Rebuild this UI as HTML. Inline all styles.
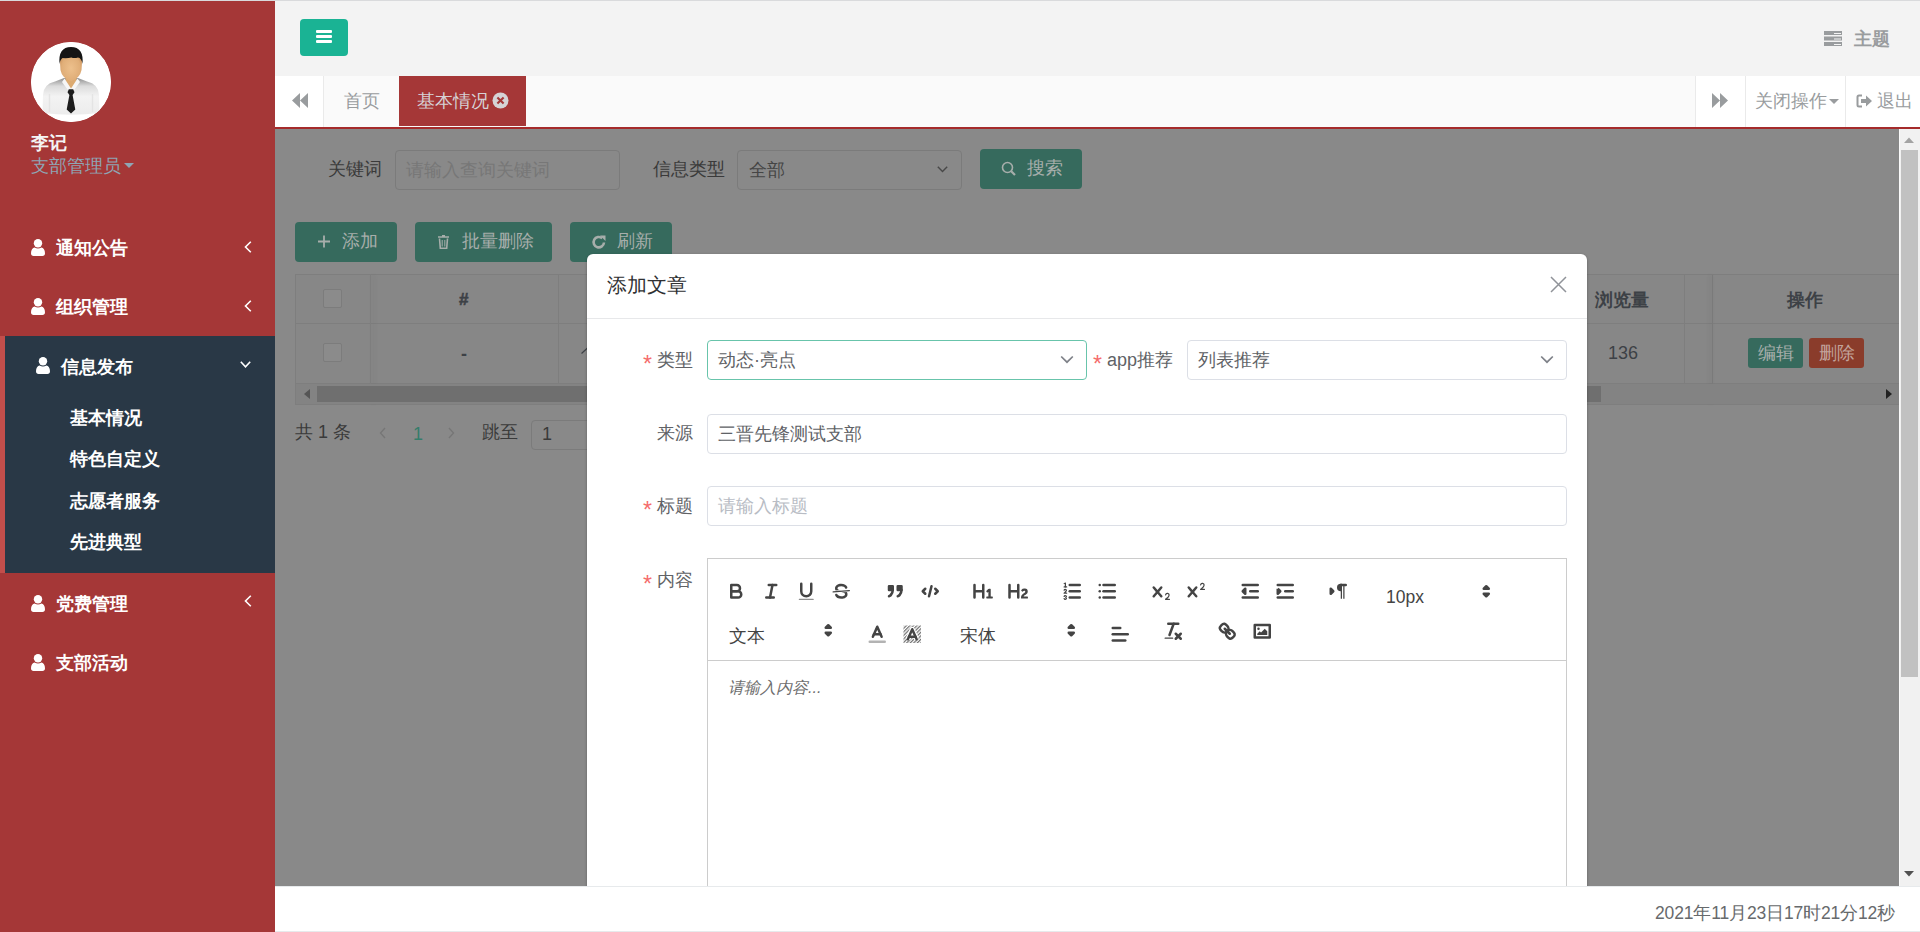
<!DOCTYPE html>
<html><head><meta charset="utf-8">
<style>
*{box-sizing:border-box;margin:0;padding:0}
html,body{width:1920px;height:932px;overflow:hidden}
body{position:relative;background:#f3f3f3;font-family:"Liberation Sans",sans-serif;color:#676a6c}
.a{position:absolute}
svg{display:block}
.topline{left:0;top:0;width:1920px;height:1px;background:#d9dadc}
/* sidebar */
.side{left:0;top:1px;width:275px;height:931px;background:#a53737}
.avatar{left:31px;top:42px;width:80px;height:80px;border-radius:50%;background:#fff;overflow:hidden}
.uname{left:31px;top:131px;font-size:18px;font-weight:bold;color:#f4f4f4;line-height:24px;white-space:nowrap}
.urole{left:31px;top:154px;font-size:18px;color:#8fa5b4;line-height:24px;white-space:nowrap}
.caret{display:inline-block;width:0;height:0;border-left:5px solid transparent;border-right:5px solid transparent;border-top:5px solid #8fa5b4;vertical-align:middle;margin-left:3px;position:relative;top:-2px}
.nav{color:#fff;font-size:18px;font-weight:bold;line-height:24px;white-space:nowrap}
.ico-user{display:inline-block;width:13px;height:15px;position:relative;vertical-align:top}
.active-sec{left:0;top:336px;width:275px;height:237px;background:#293846;border-left:5px solid #c24e4b}
.chev{position:absolute;width:7px;height:7px;border-left:2px solid #fff;border-bottom:2px solid #fff}
/* header */
.menubtn{left:300px;top:19px;width:48px;height:37px;background:#1ab394;border-radius:4px}
.bar{position:absolute;left:16px;width:16px;height:3px;background:#fff;border-radius:1px}
.theme{left:1823px;top:27px;color:#999c9e;font-size:18px;font-weight:bold;line-height:24px}
/* tabs */
.tabbar{left:275px;top:76px;width:1645px;height:51px;background:#fafafa}
.redline{left:275px;top:127px;width:1645px;height:2px;background:#a52b2b}
.tb{position:absolute;top:0;height:51px;line-height:50px;font-size:18px;color:#999c9e;white-space:nowrap}
/* content overlay */
.content{left:275px;top:129px;width:1624px;height:757px;background:#898989;overflow:hidden}
.vscroll{z-index:5;left:1899px;top:129px;width:21px;height:757px;background:#f1f1f1}
.footer{z-index:5;left:275px;top:886px;width:1645px;height:46px;background:#fff;border-top:1px solid #e7eaec}

.c{position:absolute;white-space:nowrap}
.lbl{font-size:18px;color:#3a3a3a;line-height:24px}
.dinput{border:1px solid #7b7b7b;border-radius:4px;background:#898989}
.gbtn{background:#366a5d;border-radius:4px;color:#a7aeab;font-size:18px;line-height:40px}
.th{color:#3d4146;font-weight:bold;font-size:18px}
.cb{width:19px;height:19px;border:1px solid #7c7c7c;border-radius:2px;background:#8b8b8b}
.modal{left:587px;top:254px;width:1000px;height:700px;background:#fff;border-radius:6px;box-shadow:0 1px 3px rgba(0,0,0,.3)}
.mlbl{font-size:18px;color:#606266;line-height:24px}
.star{color:#f56c6c;font-size:23px;margin-right:5px;position:relative;top:6px;line-height:10px}
.minput{border:1px solid #dcdfe6;border-radius:4px;background:#fff;font-size:18px;color:#606266;line-height:38px;padding-left:10px}
.ql{stroke:#444;fill:none;stroke-width:2}
</style></head>
<body>
<div class="a topline"></div>
<div class="a side"></div>
<div class="a active-sec"></div>
<div class="a avatar"><svg width="80" height="80" viewBox="0 0 80 80">
<defs>
<linearGradient id="sh" x1="0" y1="0" x2="0" y2="1"><stop offset="0" stop-color="#8e8e8e"/><stop offset="0.22" stop-color="#dcdcdc"/><stop offset="0.5" stop-color="#f3f3f3"/><stop offset="1" stop-color="#ececec"/></linearGradient>
<radialGradient id="sk" cx="0.5" cy="0.55" r="0.6"><stop offset="0" stop-color="#edc08c"/><stop offset="0.7" stop-color="#e0ae78"/><stop offset="1" stop-color="#c98f58"/></radialGradient>
</defs>
<circle cx="40" cy="40" r="40" fill="#fff"/>
<path d="M11.5 71L12 53Q12.5 42 24 39.5L33 36H47L56 39.5Q67.5 42 68 53L68.5 71Q40 74.5 11.5 71Z" fill="url(#sh)"/>
<path d="M18.5 70V52M61.5 70V52" stroke="#e4e4e4" stroke-width="1.5"/>
<path d="M34.5 33H45.5V43L40 48L34.5 43Z" fill="#dcaa70"/>
<path d="M33.5 36.5L40 46.5L46.5 36.5L49 40L42 49.5H38L31 40Z" fill="#f6f6f6"/>
<path d="M29 20Q29 10 40 10Q51 10 51 20L50.5 28Q49 36 40 39.5Q31 36 29.5 28Z" fill="url(#sk)"/>
<path d="M28.5 22Q27 5 40 5Q53 5 51.5 22Q50.5 16 47 15.5Q43 16.5 40.5 15.5Q36 16.5 31.5 16Q29.2 17.5 28.5 22Z" fill="#151515"/>
<path d="M37.8 47.2H42.2L43.5 50.2L41.6 53L44.3 67.5L40 71.5L35.7 67.5L38.4 53L36.5 50.2Z" fill="#1d1d1d"/>
</svg></div>
<div class="a uname">李记</div>
<div class="a urole">支部管理员<span class="caret"></span></div>

<div class="a nav" style="left:56px;top:236px">通知公告</div>
<div class="a nav" style="left:56px;top:295px">组织管理</div>
<div class="a nav" style="left:61px;top:355px">信息发布</div>
<div class="a nav" style="left:70px;top:406px">基本情况</div>
<div class="a nav" style="left:70px;top:447px">特色自定义</div>
<div class="a nav" style="left:70px;top:489px">志愿者服务</div>
<div class="a nav" style="left:70px;top:530px">先进典型</div>
<div class="a nav" style="left:56px;top:592px">党费管理</div>
<div class="a nav" style="left:56px;top:651px">支部活动</div>

<div class="a" style="left:31px;top:239px"><svg width="14" height="17" viewBox="0 0 14 17"><circle cx="7" cy="4.3" r="4.2" fill="#fff"/><path d="M0 14.2C0 11 1.6 8.9 3.6 8.6Q7 10.6 10.4 8.6C12.4 8.9 14 11 14 14.2C14 16 13 17 11.5 17H2.5C1 17 0 16 0 14.2Z" fill="#fff"/></svg></div>
<div class="a" style="left:31px;top:298px"><svg width="14" height="17" viewBox="0 0 14 17"><circle cx="7" cy="4.3" r="4.2" fill="#fff"/><path d="M0 14.2C0 11 1.6 8.9 3.6 8.6Q7 10.6 10.4 8.6C12.4 8.9 14 11 14 14.2C14 16 13 17 11.5 17H2.5C1 17 0 16 0 14.2Z" fill="#fff"/></svg></div>
<div class="a" style="left:31px;top:595px"><svg width="14" height="17" viewBox="0 0 14 17"><circle cx="7" cy="4.3" r="4.2" fill="#fff"/><path d="M0 14.2C0 11 1.6 8.9 3.6 8.6Q7 10.6 10.4 8.6C12.4 8.9 14 11 14 14.2C14 16 13 17 11.5 17H2.5C1 17 0 16 0 14.2Z" fill="#fff"/></svg></div>
<div class="a" style="left:36px;top:357px"><svg width="14" height="17" viewBox="0 0 14 17"><circle cx="7" cy="4.3" r="4.2" fill="#fff"/><path d="M0 14.2C0 11 1.6 8.9 3.6 8.6Q7 10.6 10.4 8.6C12.4 8.9 14 11 14 14.2C14 16 13 17 11.5 17H2.5C1 17 0 16 0 14.2Z" fill="#fff"/></svg></div>
<div class="a" style="left:36px;top:651px;display:none"></div>
<div class="a" style="left:31px;top:654px"><svg width="14" height="17" viewBox="0 0 14 17"><circle cx="7" cy="4.3" r="4.2" fill="#fff"/><path d="M0 14.2C0 11 1.6 8.9 3.6 8.6Q7 10.6 10.4 8.6C12.4 8.9 14 11 14 14.2C14 16 13 17 11.5 17H2.5C1 17 0 16 0 14.2Z" fill="#fff"/></svg></div>
<div class="a" style="left:244px;top:241px"><svg width="8" height="12" viewBox="0 0 8 12"><path d="M6.8 0.8L1.5 6L6.8 11.2" stroke="#fff" stroke-width="1.6" fill="none"/></svg></div>
<div class="a" style="left:244px;top:300px"><svg width="8" height="12" viewBox="0 0 8 12"><path d="M6.8 0.8L1.5 6L6.8 11.2" stroke="#fff" stroke-width="1.6" fill="none"/></svg></div>
<div class="a" style="left:244px;top:595px"><svg width="8" height="12" viewBox="0 0 8 12"><path d="M6.8 0.8L1.5 6L6.8 11.2" stroke="#fff" stroke-width="1.6" fill="none"/></svg></div>
<div class="a" style="left:240px;top:361px"><svg width="11" height="7" viewBox="0 0 11 7"><path d="M0.8 0.8L5.5 5.8L10.2 0.8" stroke="#fff" stroke-width="1.6" fill="none"/></svg></div>
<div class="a menubtn"><div class="bar" style="top:11px"></div><div class="bar" style="top:16px"></div><div class="bar" style="top:21px"></div></div>
<div class="a" style="left:1824px;top:31px"><svg width="18" height="15" viewBox="0 0 18 15"><rect x="0" y="0" width="18" height="4" fill="#999c9e"/><rect x="0" y="5.5" width="18" height="4" fill="#999c9e"/><rect x="0" y="11" width="18" height="4" fill="#999c9e"/><rect x="10" y="2" width="7" height="1" fill="#f3f3f3"/><rect x="10" y="7.5" width="7" height="1" fill="#f3f3f3"/><rect x="10" y="13" width="7" height="1" fill="#f3f3f3"/></svg></div>
<div class="a theme" style="left:1854px">主题</div>

<div class="a tabbar">
 <div class="tb" style="left:0;width:49px;background:#fff;border-right:1px solid #eaeaea"><div class="a" style="left:17px;top:17px"><svg width="16" height="15" viewBox="0 0 16 15"><path d="M8 0V15L0 7.5Z M16 0V15L8 7.5Z" fill="#999c9e"/></svg></div></div>
 <div class="tb" style="left:69px">首页</div>
 <div class="tb" style="left:124px;width:127px;height:50px;background:#a53737;color:#d6d2d6"><span style="position:absolute;left:18px">基本情况</span><div class="a" style="left:92.5px;top:16px"><svg width="17" height="17" viewBox="0 0 17 17"><circle cx="8.5" cy="8.5" r="8" fill="#d5d3d5"/><path d="M5.4 5.4L11.6 11.6M11.6 5.4L5.4 11.6" stroke="#a53737" stroke-width="2.1"/></svg></div></div>
 <div class="tb" style="left:1420px;width:50px;background:#fff;border-left:1px solid #eaeaea"><div class="a" style="left:16px;top:17px"><svg width="16" height="15" viewBox="0 0 16 15"><path d="M0 0V15L8 7.5Z M8 0V15L16 7.5Z" fill="#999c9e"/></svg></div></div>
 <div class="tb" style="left:1470px;width:100px;background:#fff;border-left:1px solid #eaeaea"><span style="position:absolute;left:8.5px">关闭操作</span><span style="position:absolute;left:83px;top:23px;width:0;height:0;border-left:5px solid transparent;border-right:5px solid transparent;border-top:5px solid #999c9e"></span></div>
 <div class="tb" style="left:1570px;width:75px;background:#fff;border-left:1px solid #eaeaea"><div class="a" style="left:10px;top:17px"><svg width="17" height="16" viewBox="0 0 17 16"><path d="M6 2.5H3Q1.5 2.5 1.5 4V12Q1.5 13.5 3 13.5H6" stroke="#999c9e" stroke-width="2" fill="none"/><path d="M5 6H10V2.5L16 8L10 13.5V10H5Z" fill="#999c9e"/></svg></div><span style="position:absolute;left:31px">退出</span></div>
</div>
<div class="a redline"></div>
<div class="a content"></div>
<!-- search row -->
<div class="c lbl" style="left:328px;top:157px">关键词</div>
<div class="c dinput" style="left:395px;top:150px;width:225px;height:40px"><span class="c" style="left:10px;top:7px;font-size:18px;color:#777;line-height:24px">请输入查询关键词</span></div>
<div class="c lbl" style="left:653px;top:157px">信息类型</div>
<div class="c dinput" style="left:737px;top:150px;width:225px;height:40px"><span class="c" style="left:11px;top:7px;font-size:18px;color:#454545;line-height:24px">全部</span><svg class="c" style="left:199px;top:15px" width="11" height="7" viewBox="0 0 11 7"><path d="M0.8 0.8L5.5 5.6L10.2 0.8" stroke="#484848" stroke-width="1.4" fill="none"/></svg></div>
<div class="c gbtn" style="left:980px;top:149px;width:102px;height:40px"><svg class="c" style="left:21px;top:12px" width="16" height="16" viewBox="0 0 16 16"><circle cx="6.5" cy="6.5" r="5" stroke="#a7aeab" stroke-width="1.6" fill="none"/><path d="M10.2 10.2L14 14" stroke="#a7aeab" stroke-width="2.2"/></svg><span class="c" style="left:47px;top:-1.5px">搜索</span></div>
<!-- action buttons -->
<div class="c gbtn" style="left:295px;top:222px;width:102px;height:40px"><svg class="c" style="left:23px;top:13px" width="12" height="13" viewBox="0 0 12 13"><path d="M6 0.5V12.5M0 6.5H12" stroke="#a7aeab" stroke-width="1.8"/></svg><span class="c" style="left:47px;top:-1.5px">添加</span></div>
<div class="c gbtn" style="left:415px;top:222px;width:137px;height:40px"><svg class="c" style="left:23px;top:13px" width="11" height="14" viewBox="0 0 11 14"><path d="M0 2H11M4 0.8H7M1.5 3.5L2.3 13.2H8.7L9.5 3.5" stroke="#a7aeab" stroke-width="1.6" fill="none"/><path d="M4.2 5V11.5M6.8 5V11.5" stroke="#a7aeab" stroke-width="1"/></svg><span class="c" style="left:47px;top:-1.5px">批量删除</span></div>
<div class="c gbtn" style="left:570px;top:222px;width:102px;height:40px"><svg class="c" style="left:21px;top:12px" width="16" height="16" viewBox="0 0 16 16"><path d="M13 8.5A5.2 5.2 0 1 1 11.2 4.2" stroke="#a7aeab" stroke-width="2.6" fill="none"/><path d="M9 1.5L14.5 1.5L14.5 7Z" fill="#a7aeab"/></svg><span class="c" style="left:47px;top:-1.5px">刷新</span></div>
<!-- table -->
<div class="c" style="left:295px;top:274px;width:1604px;height:131px;border:1px solid #7e7e7e;border-right:none;background:#878787"></div>
<div class="c" style="left:296px;top:323px;width:1603px;height:1px;background:#7e7e7e"></div>
<div class="c" style="left:296px;top:383px;width:1603px;height:1px;background:#7e7e7e"></div>
<div class="c" style="left:370px;top:275px;width:1px;height:129px;background:#7e7e7e;box-shadow:3px 0 5px rgba(0,0,0,.10)"></div>
<div class="c" style="left:558px;top:275px;width:1px;height:108px;background:#7e7e7e"></div>
<div class="c" style="left:1684px;top:275px;width:1px;height:108px;background:#7e7e7e"></div>
<div class="c" style="left:1712px;top:275px;width:1px;height:129px;background:#7a7a7a;box-shadow:-2px 0 4px rgba(0,0,0,.12)"></div>
<div class="c cb" style="left:323px;top:289px"></div>
<div class="c cb" style="left:323px;top:343px"></div>
<div class="c th" style="left:459px;top:290px;font-size:17px;-webkit-text-stroke:0.6px #3d4146">#</div>
<div class="c" style="left:461px;top:344px;font-size:18px;color:#3d4146;font-weight:bold">-</div>
<div class="c th" style="left:1595px;top:288px">浏览量</div>
<div class="c th" style="left:1787px;top:288px">操作</div>
<div class="c" style="left:1608px;top:343px;font-size:18px;color:#3d4146">136</div>
<div class="c" style="left:1748px;top:338px;width:55px;height:30px;background:#366a5d;border-radius:3px;color:#a7aeab;font-size:18px;line-height:30px;text-align:center">编辑</div>
<div class="c" style="left:1809px;top:338px;width:55px;height:30px;background:#8a3c2b;border-radius:3px;color:#c2a39c;font-size:18px;line-height:30px;text-align:center">删除</div>
<svg class="c" style="left:581px;top:347px" width="7" height="7" viewBox="0 0 7 7"><path d="M0.5 6.5L6.5 1" stroke="#3d4146" stroke-width="1.2"/></svg>
<!-- h scrollbar -->
<div class="c" style="left:296px;top:384px;width:1603px;height:20px;background:#838383"></div>
<div class="c" style="left:317px;top:386px;width:1284px;height:16px;background:#6f6f6f"></div>
<svg class="c" style="left:304px;top:389px" width="6" height="10" viewBox="0 0 6 10"><path d="M6 0V10L0 5Z" fill="#555"/></svg>
<svg class="c" style="left:1886px;top:389px" width="6" height="10" viewBox="0 0 6 10"><path d="M0 0V10L6 5Z" fill="#222"/></svg>
<!-- pagination -->
<div class="c" style="left:295px;top:420px;font-size:18px;color:#3a3a3a;line-height:24px">共 1 条</div>
<svg class="c" style="left:379px;top:427px" width="7" height="12" viewBox="0 0 7 12"><path d="M6 1L1.5 6L6 11" stroke="#767676" stroke-width="1.3" fill="none"/></svg>
<div class="c" style="left:413px;top:422px;font-size:18px;color:#357d6b;line-height:24px">1</div>
<svg class="c" style="left:448px;top:427px" width="7" height="12" viewBox="0 0 7 12"><path d="M1 1L5.5 6L1 11" stroke="#767676" stroke-width="1.3" fill="none"/></svg>
<div class="c" style="left:482px;top:420px;font-size:18px;color:#3a3a3a;line-height:24px">跳至</div>
<div class="c dinput" style="left:531px;top:420px;width:80px;height:30px"><span class="c" style="left:10px;top:1px;font-size:18px;color:#3a3a3a;line-height:24px">1</span></div>

<!-- modal -->
<div class="a modal">
 <div class="c" style="left:20px;top:18px;font-size:20px;color:#303133;line-height:26px">添加文章</div>
 <svg class="c" style="left:963px;top:22px" width="17" height="17" viewBox="0 0 17 17"><path d="M1 1L16 16M16 1L1 16" stroke="#909399" stroke-width="1.5"/></svg>
 <div class="c" style="left:0;top:64px;width:1000px;height:1px;background:#e7e8ea"></div>
 <!-- row1 -->
 <div class="c mlbl" style="left:0;width:106px;text-align:right;top:94px"><span class="star">*</span>类型</div>
 <div class="c minput" style="left:120px;top:86px;width:380px;height:40px;border-color:#68c4ab">动态·亮点<svg class="c" style="left:352px;top:14px" width="14" height="9" viewBox="0 0 14 9"><path d="M1.2 1.5L7 7.2L12.8 1.5" stroke="#7e8188" stroke-width="1.7" fill="none"/></svg></div>
 <div class="c mlbl" style="left:400px;width:186px;text-align:right;top:94px"><span class="star">*</span>app推荐</div>
 <div class="c minput" style="left:600px;top:86px;width:380px;height:40px">列表推荐<svg class="c" style="left:352px;top:14px" width="14" height="9" viewBox="0 0 14 9"><path d="M1.2 1.5L7 7.2L12.8 1.5" stroke="#7e8188" stroke-width="1.7" fill="none"/></svg></div>
 <!-- row2 -->
 <div class="c mlbl" style="left:0;width:106px;text-align:right;top:167px">来源</div>
 <div class="c minput" style="left:120px;top:160px;width:860px;height:40px">三晋先锋测试支部</div>
 <!-- row3 -->
 <div class="c mlbl" style="left:0;width:106px;text-align:right;top:240px"><span class="star">*</span>标题</div>
 <div class="c minput" style="left:120px;top:232px;width:860px;height:40px;color:#b8bcc4">请输入标题</div>
 <!-- row4 -->
 <div class="c mlbl" style="left:0;width:106px;text-align:right;top:314px"><span class="star">*</span>内容</div>
 <div class="c" style="left:120px;top:304px;width:860px;height:600px;border:1px solid #ccc"></div>
 <div class="c" style="left:121px;top:406px;width:858px;height:1px;background:#ccc"></div>
<svg class="c" style="left:137.75px;top:325.75px" width="22.5" height="22.5" viewBox="0 0 18 18"><path stroke="#444" stroke-width="2" fill="none" stroke-linecap="round" stroke-linejoin="round" d="M5,4H9.5A2.5,2.5,0,0,1,12,6.5v0A2.5,2.5,0,0,1,9.5,9H5A0,0,0,0,1,5,9V4A0,0,0,0,1,5,4Z"/><path stroke="#444" stroke-width="2" fill="none" stroke-linecap="round" stroke-linejoin="round" d="M5,9h5.5A2.5,2.5,0,0,1,13,11.5v0A2.5,2.5,0,0,1,10.5,14H5a0,0,0,0,1,0,0V9A0,0,0,0,1,5,9Z"/></svg>
<svg class="c" style="left:172.75px;top:325.75px" width="22.5" height="22.5" viewBox="0 0 18 18"><line stroke="#444" stroke-width="2" fill="none" stroke-linecap="round" stroke-linejoin="round" x1="7" x2="13" y1="4" y2="4"/><line stroke="#444" stroke-width="2" fill="none" stroke-linecap="round" stroke-linejoin="round" x1="5" x2="11" y1="14" y2="14"/><line stroke="#444" stroke-width="2" fill="none" stroke-linecap="round" stroke-linejoin="round" x1="8" x2="10" y1="14" y2="4"/></svg>
<svg class="c" style="left:207.75px;top:325.75px" width="22.5" height="22.5" viewBox="0 0 18 18"><path stroke="#444" stroke-width="2" fill="none" stroke-linecap="round" stroke-linejoin="round" d="M5,3V9a4.012,4.012,0,0,0,4,4H9a3.974,3.974,0,0,0,4-4V3"/><rect fill="#444" opacity="0.6" height="1" rx="0.5" ry="0.5" width="12" x="3" y="15"/></svg>
<svg class="c" style="left:242.75px;top:325.75px" width="22.5" height="22.5" viewBox="0 0 18 18"><line stroke="#444" stroke-width="1" fill="none" stroke-linecap="round" stroke-linejoin="round" x1="15.5" x2="2.5" y1="8.5" y2="9.5"/><path fill="#444" d="M9.007,8C6.542,7.791,6,7.519,6,6.5,6,5.792,7.283,5,9,5c1.571,0,2.765.679,2.969,1.309a1,1,0,0,0,1.9-.617C13.356,4.106,11.354,3,9,3,6.2,3,4,4.538,4,6.5a3.2,3.2,0,0,0,.5,1.843Z"/><path fill="#444" d="M8.984,10C11.457,10.208,12,10.479,12,11.5c0,0.708-1.283,1.5-3,1.5-1.571,0-2.765-.679-2.969-1.309a1,1,0,1,0-1.9.617C4.644,13.894,6.646,15,9,15c2.8,0,5-1.538,5-3.5a3.2,3.2,0,0,0-.5-1.843Z"/></svg>
<svg class="c" style="left:296.50px;top:325.75px" width="22.5" height="22.5" viewBox="0 0 18 18"><rect fill="#444" stroke="#444" stroke-width="2" stroke-linejoin="round" height="3" width="3" x="4" y="5"/><rect fill="#444" stroke="#444" stroke-width="2" stroke-linejoin="round" height="3" width="3" x="11" y="5"/><path fill="#444" fill-rule="evenodd" stroke="#444" stroke-width="2" stroke-linecap="round" d="M7,8c0,4.031-3,5-3,4.969"/><path fill="#444" fill-rule="evenodd" stroke="#444" stroke-width="2" stroke-linecap="round" d="M14,8c0,4.031-3,5-3,4.969"/></svg>
<svg class="c" style="left:331.50px;top:325.75px" width="22.5" height="22.5" viewBox="0 0 18 18"><polyline stroke="#444" stroke-width="2" fill="none" stroke-linecap="round" stroke-linejoin="round" points="5 7 3 9 5 11"/><polyline stroke="#444" stroke-width="2" fill="none" stroke-linecap="round" stroke-linejoin="round" points="13 7 15 9 13 11"/><line stroke="#444" stroke-width="2" fill="none" stroke-linecap="round" stroke-linejoin="round" x1="10" x2="8" y1="5" y2="13"/></svg>
<svg class="c" style="left:385.25px;top:325.75px" width="22.5" height="22.5" viewBox="0 0 18 18"><path fill="#444" d="M10,4V14a1,1,0,0,1-2,0V10H3v4a1,1,0,0,1-2,0V4A1,1,0,0,1,3,4V8H8V4a1,1,0,0,1,2,0Zm6.06787,9.209H14.98975V7.59863a.54085.54085,0,0,0-.605-.60547h-.62744a1.01119,1.01119,0,0,0-.748.29688L11.645,8.56641a.5435.5435,0,0,0-.022.8584l.28613.30762a.53861.53861,0,0,0,.84717.0332l.09912-.08789a1.2137,1.2137,0,0,0,.2417-.35254h.02246s-.01123.30859-.01123.60547V13.209H12.041a.54085.54085,0,0,0-.605.60547v.43945a.54085.54085,0,0,0,.605.60547h4.02686a.54085.54085,0,0,0,.605-.60547v-.43945A.54085.54085,0,0,0,16.06787,13.209Z"/></svg>
<svg class="c" style="left:420.25px;top:325.75px" width="22.5" height="22.5" viewBox="0 0 18 18"><path fill="#444" d="M16.73975,13.81445v.43945a.54085.54085,0,0,1-.605.60547H11.855a.58392.58392,0,0,1-.64893-.60547V14.0127c0-2.90527,3.39941-3.42187,3.39941-4.55469a.77675.77675,0,0,0-.84717-.78125,1.17684,1.17684,0,0,0-.83594.38477c-.2749.26367-.561.374-.85791.13184l-.4292-.34082c-.30811-.24219-.38525-.51758-.1543-.81445a2.97155,2.97155,0,0,1,2.45361-1.17676,2.45393,2.45393,0,0,1,2.68408,2.40918c0,2.45312-3.1792,2.92676-3.27832,3.93848h2.79443A.54085.54085,0,0,1,16.73975,13.81445ZM9,3A.99974.99974,0,0,0,8,4V8H3V4A1,1,0,0,0,1,4V14a1,1,0,0,0,2,0V10H8v4a1,1,0,0,0,2,0V4A.99974.99974,0,0,0,9,3Z"/></svg>
<svg class="c" style="left:474.00px;top:325.75px" width="22.5" height="22.5" viewBox="0 0 18 18"><line stroke="#444" stroke-width="2" fill="none" stroke-linecap="round" stroke-linejoin="round" x1="7" x2="15" y1="4" y2="4"/><line stroke="#444" stroke-width="2" fill="none" stroke-linecap="round" stroke-linejoin="round" x1="7" x2="15" y1="9" y2="9"/><line stroke="#444" stroke-width="2" fill="none" stroke-linecap="round" stroke-linejoin="round" x1="7" x2="15" y1="14" y2="14"/><line stroke="#444" stroke-width="1" fill="none" stroke-linecap="round" stroke-linejoin="round" x1="2.5" x2="4.5" y1="5.5" y2="5.5"/><path fill="#444" d="M3.5,6A0.5,0.5,0,0,1,3,5.5V3.085l-0.276.138A0.5,0.5,0,0,1,2.053,3c-0.124-.247-0.023-0.324.224-0.447l1-.5A0.5,0.5,0,0,1,4,2.5v3A0.5,0.5,0,0,1,3.5,6Z"/><path stroke="#444" stroke-width="1" fill="none" stroke-linecap="round" stroke-linejoin="round" d="M4.5,10.5h-2c0-.234,1.85-1.076,1.85-2.234A0.959,0.959,0,0,0,2.5,8.156"/><path stroke="#444" stroke-width="1" fill="none" stroke-linecap="round" stroke-linejoin="round" d="M2.5,14.846a0.959,0.959,0,0,0,1.85-.109A0.7,0.7,0,0,0,3.75,14a0.688,0.688,0,0,0,.6-0.736,0.959,0.959,0,0,0-1.85-.109"/></svg>
<svg class="c" style="left:509.00px;top:325.75px" width="22.5" height="22.5" viewBox="0 0 18 18"><line stroke="#444" stroke-width="2" fill="none" stroke-linecap="round" stroke-linejoin="round" x1="6" x2="15" y1="4" y2="4"/><line stroke="#444" stroke-width="2" fill="none" stroke-linecap="round" stroke-linejoin="round" x1="6" x2="15" y1="9" y2="9"/><line stroke="#444" stroke-width="2" fill="none" stroke-linecap="round" stroke-linejoin="round" x1="6" x2="15" y1="14" y2="14"/><line stroke="#444" stroke-width="2" fill="none" stroke-linecap="round" stroke-linejoin="round" x1="3" x2="3" y1="4" y2="4"/><line stroke="#444" stroke-width="2" fill="none" stroke-linecap="round" stroke-linejoin="round" x1="3" x2="3" y1="9" y2="9"/><line stroke="#444" stroke-width="2" fill="none" stroke-linecap="round" stroke-linejoin="round" x1="3" x2="3" y1="14" y2="14"/></svg>
<svg class="c" style="left:562.75px;top:325.75px" width="22.5" height="22.5" viewBox="0 0 18 18"><path fill="#444" d="M15.5,15H13.861a3.858,3.858,0,0,0,1.914-2.975,1.8,1.8,0,0,0-1.6-1.751A1.921,1.921,0,0,0,12.021,11.7a0.50013,0.50013,0,1,0,.957.291h0a0.914,0.914,0,0,1,1.053-.725,0.81,0.81,0,0,1,.744.762c0,1.076-1.16971,1.86982-1.93971,2.43082A1.45639,1.45639,0,0,0,12,15.5a0.5,0.5,0,0,0,.5.5h3A0.5,0.5,0,0,0,15.5,15Z"/><path fill="#444" d="M9.65,5.241a1,1,0,0,0-1.409.108L6,7.964,3.759,5.349A1,1,0,0,0,2.192,6.59178Q2.21541,6.6213,2.241,6.649L4.684,9.5,2.241,12.35A1,1,0,0,0,3.71,13.70722q0.02557-.02768.049-0.05722L6,11.036,8.241,13.65a1,1,0,1,0,1.567-1.24277Q9.78459,12.3777,9.759,12.35L7.316,9.5,9.759,6.651A1,1,0,0,0,9.65,5.241Z"/></svg>
<svg class="c" style="left:597.75px;top:325.75px" width="22.5" height="22.5" viewBox="0 0 18 18"><path fill="#444" d="M15.5,7H13.861a4.015,4.015,0,0,0,1.914-2.975,1.8,1.8,0,0,0-1.6-1.751A1.922,1.922,0,0,0,12.021,3.7a0.5,0.5,0,1,0,.957.291,0.917,0.917,0,0,1,1.053-.725,0.81,0.81,0,0,1,.744.762c0,1.077-1.164,1.925-1.934,2.486A1.423,1.423,0,0,0,12,7.5a0.5,0.5,0,0,0,.5.5h3A0.5,0.5,0,0,0,15.5,7Z"/><path fill="#444" d="M9.651,5.241a1,1,0,0,0-1.41.108L6,7.964,3.759,5.349a1,1,0,1,0-1.519,1.3L4.683,9.5,2.241,12.35a1,1,0,1,0,1.519,1.3L6,11.036,8.241,13.65a1,1,0,0,0,1.519-1.3L7.317,9.5,9.759,6.651A1,1,0,0,0,9.651,5.241Z"/></svg>
<svg class="c" style="left:651.50px;top:325.75px" width="22.5" height="22.5" viewBox="0 0 18 18"><line stroke="#444" stroke-width="2" fill="none" stroke-linecap="round" stroke-linejoin="round" x1="3" x2="15" y1="14" y2="14"/><line stroke="#444" stroke-width="2" fill="none" stroke-linecap="round" stroke-linejoin="round" x1="3" x2="15" y1="4" y2="4"/><line stroke="#444" stroke-width="2" fill="none" stroke-linecap="round" stroke-linejoin="round" x1="9" x2="15" y1="9" y2="9"/><polyline stroke="#444" stroke-width="2" fill="none" stroke-linecap="round" stroke-linejoin="round" fill="#444" points="5 7 5 11 3 9 5 7"/></svg>
<svg class="c" style="left:686.50px;top:325.75px" width="22.5" height="22.5" viewBox="0 0 18 18"><line stroke="#444" stroke-width="2" fill="none" stroke-linecap="round" stroke-linejoin="round" x1="3" x2="15" y1="14" y2="14"/><line stroke="#444" stroke-width="2" fill="none" stroke-linecap="round" stroke-linejoin="round" x1="3" x2="15" y1="4" y2="4"/><line stroke="#444" stroke-width="2" fill="none" stroke-linecap="round" stroke-linejoin="round" x1="9" x2="15" y1="9" y2="9"/><polyline stroke="#444" stroke-width="2" stroke-linejoin="round" fill="#444" points="3 7 3 11 5 9 3 7"/></svg>
<svg class="c" style="left:740.25px;top:325.75px" width="22.5" height="22.5" viewBox="0 0 18 18"><polygon stroke="#444" stroke-width="2" stroke-linejoin="round" fill="#444" points="3 11 5 9 3 7 3 11"/><line stroke="#444" stroke-width="2" fill="none" stroke-linecap="round" stroke-linejoin="round" x1="15" x2="11" y1="4" y2="4"/><path fill="#444" d="M11,3a3,3,0,0,0,0,6h1V3H11Z"/><rect fill="#444" height="11" width="1" x="11" y="4"/><rect fill="#444" height="11" width="1" x="13" y="4"/></svg>
<svg class="c" style="left:887.75px;top:325.75px" width="22.5" height="22.5" viewBox="0 0 18 18"><polygon stroke="#444" stroke-width="2" stroke-linejoin="round" fill="#444" points="7 11 9 13 11 11 7 11"/><polygon stroke="#444" stroke-width="2" stroke-linejoin="round" fill="#444" points="7 7 9 5 11 7 7 7"/></svg>
<svg class="c" style="left:230.00px;top:365.40px" width="22.5" height="22.5" viewBox="0 0 18 18"><polygon stroke="#444" stroke-width="2" stroke-linejoin="round" fill="#444" points="7 11 9 13 11 11 7 11"/><polygon stroke="#444" stroke-width="2" stroke-linejoin="round" fill="#444" points="7 7 9 5 11 7 7 7"/></svg>
<svg class="c" style="left:279.00px;top:369.00px" width="22.5" height="22.5" viewBox="0 0 18 18"><line stroke="#444" opacity="0.4" stroke-width="2" stroke-linecap="round" x1="3" x2="15" y1="15" y2="15"/><polyline stroke="#444" stroke-width="2" fill="none" stroke-linecap="round" stroke-linejoin="round" points="5.5 11 9 3 12.5 11"/><line stroke="#444" stroke-width="2" fill="none" stroke-linecap="round" stroke-linejoin="round" x1="11.63" x2="6.38" y1="9" y2="9"/></svg>
<svg class="c" style="left:314.00px;top:369.00px" width="22.5" height="22.5" viewBox="0 0 18 18"><defs><pattern id="hp" width="2" height="2" patternUnits="userSpaceOnUse" patternTransform="rotate(45)"><rect width="1" height="2" fill="#444"/></pattern></defs><rect x="2" y="2" width="14" height="14" fill="url(#hp)" opacity="0.75"/><polyline stroke="#fff" stroke-width="4" fill="none" stroke-linejoin="round" points="5.5 13 9 5 12.5 13"/><polyline stroke="#444" stroke-width="2" fill="none" stroke-linecap="round" stroke-linejoin="round" points="5.5 13 9 5 12.5 13"/><line stroke="#444" stroke-width="2" fill="none" stroke-linecap="round" stroke-linejoin="round" x1="11.63" x2="6.38" y1="11" y2="11"/></svg>
<svg class="c" style="left:473.00px;top:365.40px" width="22.5" height="22.5" viewBox="0 0 18 18"><polygon stroke="#444" stroke-width="2" stroke-linejoin="round" fill="#444" points="7 11 9 13 11 11 7 11"/><polygon stroke="#444" stroke-width="2" stroke-linejoin="round" fill="#444" points="7 7 9 5 11 7 7 7"/></svg>
<svg class="c" style="left:521.75px;top:369.00px" width="22.5" height="22.5" viewBox="0 0 18 18"><line stroke="#444" stroke-width="2" fill="none" stroke-linecap="round" stroke-linejoin="round" x1="3" x2="15" y1="9" y2="9"/><line stroke="#444" stroke-width="2" fill="none" stroke-linecap="round" stroke-linejoin="round" x1="3" x2="13" y1="14" y2="14"/><line stroke="#444" stroke-width="2" fill="none" stroke-linecap="round" stroke-linejoin="round" x1="3" x2="9" y1="4" y2="4"/></svg>
<svg class="c" style="left:575.25px;top:365.70px" width="22.5" height="22.5" viewBox="0 0 18 18"><line stroke="#444" stroke-width="2" fill="none" stroke-linecap="round" stroke-linejoin="round" x1="5" x2="13" y1="3" y2="3"/><line stroke="#444" stroke-width="2" fill="none" stroke-linecap="round" stroke-linejoin="round" x1="6" x2="9.35" y1="12" y2="3"/><line stroke="#444" stroke-width="2" fill="none" stroke-linecap="round" stroke-linejoin="round" x1="11" x2="15" y1="11" y2="15"/><line stroke="#444" stroke-width="2" fill="none" stroke-linecap="round" stroke-linejoin="round" x1="15" x2="11" y1="11" y2="15"/><rect fill="#444" height="1" rx="0.5" ry="0.5" width="7" x="2" y="14"/></svg>
<svg class="c" style="left:629.00px;top:365.70px" width="22.5" height="22.5" viewBox="0 0 18 18"><line stroke="#444" stroke-width="2" fill="none" stroke-linecap="round" stroke-linejoin="round" x1="7" x2="11" y1="7" y2="11"/><path stroke="#444" stroke-width="2" fill="none" stroke-linecap="round" stroke-linejoin="round" d="M8.9,4.577a3.476,3.476,0,0,1,.36,4.679A3.476,3.476,0,0,1,4.577,8.9C3.185,7.5,2.035,6.4,4.217,4.217S7.5,3.185,8.9,4.577Z"/><path stroke="#444" stroke-width="2" fill="none" stroke-linecap="round" stroke-linejoin="round" d="M13.423,9.1a3.476,3.476,0,0,0-4.679-.36,3.476,3.476,0,0,0,.36,4.679c1.392,1.392,2.5,2.542,4.679.36S14.815,10.5,13.423,9.1Z"/></svg>
<svg class="c" style="left:664.00px;top:366.00px" width="22.5" height="22.5" viewBox="0 0 18 18"><rect stroke="#444" stroke-width="2" fill="none" stroke-linecap="round" stroke-linejoin="round" height="10" width="12" x="3" y="4"/><circle fill="#444" cx="6" cy="7" r="1"/><polyline fill="#444" points="5 12 5 11 7 9 8 10 11 7 13 9 13 12 5 12"/></svg>
 <div class="c" style="left:799px;top:332px;font-size:17.5px;color:#444;line-height:22px">10px</div>
 <div class="c" style="left:142px;top:371px;font-size:17.5px;color:#444;line-height:22px">文本</div>
 <div class="c" style="left:373px;top:371px;font-size:17.5px;color:#444;line-height:22px">宋体</div>
 <div class="c" style="left:141px;top:422px;font-size:16px;color:#6e6e6e;font-style:italic;line-height:24px">请输入内容...</div>
</div>
<div class="a vscroll"><div class="c" style="left:0;top:0;width:1px;height:757px;background:#fafafa"></div><svg class="c" style="left:5px;top:8px" width="10" height="6" viewBox="0 0 10 6"><path d="M0 6L5 0.5L10 6Z" fill="#a3a3a3"/></svg><div class="c" style="left:2px;top:21px;width:17px;height:527px;background:#c1c1c1"></div><svg class="c" style="left:5px;top:742px" width="10" height="6" viewBox="0 0 10 6"><path d="M0 0L5 5.5L10 0Z" fill="#505050"/></svg></div>
<div class="a" style="left:275px;top:931px;width:1645px;height:1px;background:#e7eaec;z-index:6"></div>
<div class="a footer"><div class="c" style="right:25px;top:15px;font-size:17.5px;letter-spacing:-0.15px;color:#676a6c;line-height:22px">2021年11月23日17时21分12秒</div></div>
</body></html>
